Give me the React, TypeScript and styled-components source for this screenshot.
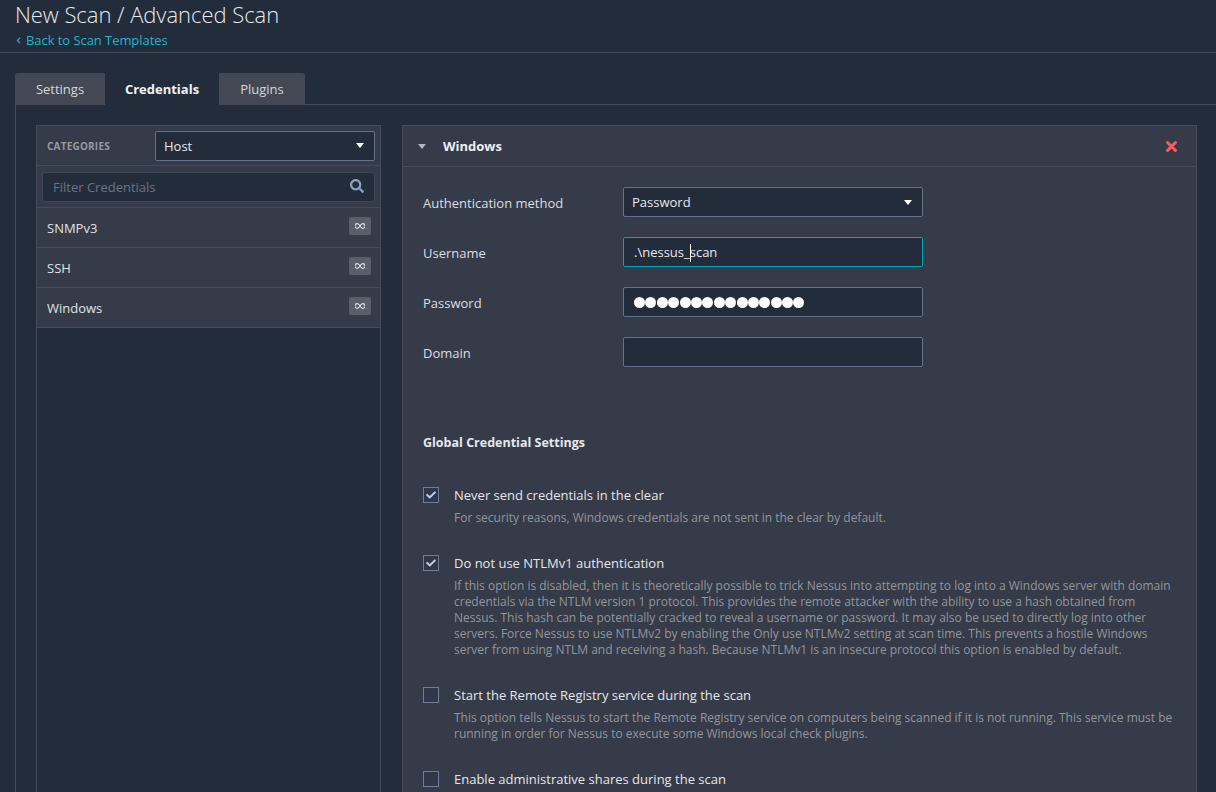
import styled, { createGlobalStyle } from 'styled-components'
import { FaCheck, FaChevronLeft, FaSearch } from 'react-icons/fa'

const GlobalStyle = createGlobalStyle`
  html, body {
    margin: 0;
    height: 792px;
    overflow: hidden;
    background: #232c3b;
  }
  * {
    box-sizing: border-box;
  }
`

const Page = styled.div`
  height: 792px;
  overflow: hidden;
  background: #232c3b;
  color: #e6e8eb;
  font-family: "Open Sans", "Liberation Sans", sans-serif;
  font-size: 13px;
`

const PageHeader = styled.header`
  height: 53px;
  padding: 0 15px;
  border-bottom: 1px solid #444c5a;
`

const Title = styled.h1`
  margin: 0;
  height: 30px;
  font-size: 22px;
  line-height: 29px;
  font-weight: 300;
  letter-spacing: -0.04px;
  color: #e8eaed;
`

const BackLink = styled.a`
  display: flex;
  align-items: center;
  gap: 4px;
  height: 20px;
  font-size: 13px;
  letter-spacing: -0.06px;
  color: #1fb5cb;
`

const Body = styled.main`
  padding: 20px 0 0 15px;
`

const Tabs = styled.nav`
  display: flex;
  height: 32px;
`

const Tab = styled.div<{ $active?: boolean; $width: number }>`
  display: flex;
  align-items: center;
  justify-content: center;
  width: ${({ $width }) => $width}px;
  height: 32px;
  font-size: 13px;
  font-weight: ${({ $active }) => ($active ? 700 : 400)};
  color: ${({ $active }) => ($active ? '#f2f3f5' : '#d5d7da')};
  background: ${({ $active }) => ($active ? '#232c3b' : '#434854')};
  position: relative;
  z-index: 1;

  &:first-child {
    border-top-left-radius: 3px;
  }
  &:last-child {
    border-top-right-radius: 3px;
  }
`

const TabContent = styled.section`
  display: flex;
  align-items: flex-start;
  gap: 21px;
  height: 700px;
  margin-top: -1px;
  padding: 20px 19px 0 20px;
  border-top: 1px solid #444c5a;
  border-left: 1px solid #444c5a;
`

const Sidebar = styled.aside`
  flex: none;
  width: 345px;
  height: 700px;
  border: 1px solid #444c5a;
  border-bottom: 0;
`

const CategoryBar = styled.div`
  display: flex;
  align-items: center;
  justify-content: space-between;
  height: 40px;
  padding: 0 5px 0 10px;
  background: #353b48;
  border-bottom: 1px solid #444c5a;
`

const CategoryLabel = styled.span`
  padding-top: 1px;
  font-size: 10px;
  font-weight: 700;
  letter-spacing: 0.2px;
  color: #969aa1;
`

const Select = styled.div<{ $width: number }>`
  display: flex;
  align-items: center;
  justify-content: space-between;
  width: ${({ $width }) => $width}px;
  height: 30px;
  padding: 0 10px 0 8px;
  font-size: 13px;
  color: #e6e8eb;
  background: #232c3b;
  border: 1px solid #66728a;
  border-radius: 2px;
`

const Caret = styled.i<{ $muted?: boolean }>`
  display: block;
  width: 0;
  height: 0;
  border-left: 4.5px solid transparent;
  border-right: 4.5px solid transparent;
  border-top: 5px solid ${({ $muted }) => ($muted ? '#b4b7bd' : '#ffffff')};
`

const FilterRow = styled.div`
  height: 42px;
  padding: 6px 5px 5px;
  background: #353b48;
  border-bottom: 1px solid #444c5a;
`

const FilterBox = styled.div`
  display: flex;
  align-items: center;
  justify-content: space-between;
  height: 30px;
  padding: 0 10px;
  font-size: 13px;
  color: #6b7280;
  background: #232c3b;
  border: 1px solid #3f4858;
  border-radius: 3px;
  svg {
    color: #8d9fc2;
    font-size: 14px;
    margin-top: -2px;
  }
`

const CredentialRow = styled.div`
  display: flex;
  align-items: center;
  justify-content: space-between;
  height: 40px;
  padding: 0 9px 0 10px;
  font-size: 13px;
  color: #e0e2e5;
  background: #353b48;
  border-bottom: 1px solid #444c5a;
`

const Badge = styled.span`
  display: flex;
  align-items: center;
  justify-content: center;
  width: 22px;
  height: 18px;
  margin-top: -3px;
  background: #5a5e68;
  border-radius: 2px;
  svg {
    color: #dfe1e4;
  }
`

const Panel = styled.article`
  flex: none;
  width: 795px;
  height: 700px;
  background: #353b48;
  border: 1px solid #444c5a;
  border-bottom: 0;
`

const PanelHead = styled.div`
  display: flex;
  align-items: center;
  height: 41px;
  padding: 0 19px 0 15px;
  border-bottom: 1px solid #444c5a;
`

const PanelTitle = styled.strong`
  margin-left: 17px;
  margin-right: auto;
  font-size: 13px;
  font-weight: 700;
  color: #eef0f2;
`

const PanelBody = styled.div`
  padding: 20px 20px 0;
`

const Fields = styled.div`
  display: grid;
  grid-template-columns: 200px 300px;
  row-gap: 20px;
  align-items: center;
`

const FieldLabel = styled.label`
  font-size: 13px;
  padding-top: 2px;
  color: #dcdee1;
`

const Input = styled.div<{ $focused?: boolean }>`
  position: relative;
  display: flex;
  align-items: center;
  height: 30px;
  padding: 0 10px;
  font-size: 13px;
  color: #e6e8eb;
  background: #232c3b;
  border: 1px solid ${({ $focused }) => ($focused ? '#04a5b8' : '#66728a')};
  border-radius: 2px;
`

const TextCursor = styled.i`
  position: absolute;
  left: 66px;
  top: 6px;
  width: 1px;
  height: 18px;
  background: #ffffff;
`

const Dots = styled.span`
  display: flex;
  gap: 0.4px;
`

const Dot = styled.i`
  width: 11px;
  height: 11px;
  border-radius: 50%;
  background: #ffffff;
`

const SectionTitle = styled.h2`
  margin: 67px 0 0;
  font-size: 12.5px;
  line-height: 18px;
  font-weight: 700;
  color: #e6e8eb;
`

const Options = styled.div`
  margin-top: 35px;
  display: flex;
  flex-direction: column;
`

const Option = styled.div<{ $gap: number }>`
  display: grid;
  grid-template-columns: 31px 1fr;
  margin-bottom: ${({ $gap }) => $gap}px;
`

const CheckBox = styled.span`
  display: flex;
  align-items: center;
  justify-content: center;
  width: 16px;
  height: 16px;
  background: #2f3849;
  border: 1px solid #707d9a;
  svg {
    color: #c3cde2;
    font-size: 10px;
  }
`

const OptionLabel = styled.div`
  font-size: 13px;
  line-height: 16px;
  color: #e4e6e9;
`

const OptionHelp = styled.p`
  margin: 7px 0 0;
  font-size: 12px;
  line-height: 16px;
  letter-spacing: -0.01px;
  color: #92969d;
`

const options = [
  {
    label: 'Never send credentials in the clear',
    checked: true,
    gap: 29,
    help: 'For security reasons, Windows credentials are not sent in the clear by default.',
  },
  {
    label: 'Do not use NTLMv1 authentication',
    checked: true,
    gap: 29,
    help: 'If this option is disabled, then it is theoretically possible to trick Nessus into attempting to log into a Windows server with domain credentials via the NTLM version 1 protocol. This provides the remote attacker with the ability to use a hash obtained from Nessus. This hash can be potentially cracked to reveal a username or password. It may also be used to directly log into other servers. Force Nessus to use NTLMv2 by enabling the Only use NTLMv2 setting at scan time. This prevents a hostile Windows server from using NTLM and receiving a hash. Because NTLMv1 is an insecure protocol this option is enabled by default.',
  },
  {
    label: 'Start the Remote Registry service during the scan',
    checked: false,
    gap: 29,
    help: 'This option tells Nessus to start the Remote Registry service on computers being scanned if it is not running. This service must be running in order for Nessus to execute some Windows local check plugins.',
  },
  { label: 'Enable administrative shares during the scan', checked: false, gap: 0 },
]

function InfinityIcon() {
  return (
    <svg width="10" height="6" viewBox="0 0 10 6" fill="none" stroke="currentColor" strokeWidth="1.1">
      <path d="M5 3C4 1.3 3.2.6 2.3.6A2.4 2.4 0 0 0 2.3 5.4C3.2 5.4 4 4.7 5 3C6 1.3 6.8.6 7.7.6A2.4 2.4 0 0 1 7.7 5.4C6.8 5.4 6 4.7 5 3Z" />
    </svg>
  )
}

function CloseIcon() {
  return (
    <svg width="11" height="11" viewBox="0 0 11 11" stroke="#f9585d" strokeWidth="3" strokeLinecap="round">
      <path d="M1.6 1.6L9.4 9.4M9.4 1.6L1.6 9.4" />
    </svg>
  )
}

export default function App() {
  return (
    <Page>
      <GlobalStyle />
      <PageHeader>
        <Title>New Scan / Advanced Scan</Title>
        <BackLink>
          <FaChevronLeft size={7} />
          Back to Scan Templates
        </BackLink>
      </PageHeader>
      <Body>
        <Tabs>
          <Tab $width={90}>Settings</Tab>
          <Tab $width={114} $active>Credentials</Tab>
          <Tab $width={86}>Plugins</Tab>
        </Tabs>
        <TabContent>
          <Sidebar>
            <CategoryBar>
              <CategoryLabel>CATEGORIES</CategoryLabel>
              <Select $width={220}>
                Host
                <Caret />
              </Select>
            </CategoryBar>
            <FilterRow>
              <FilterBox>
                Filter Credentials
                <FaSearch />
              </FilterBox>
            </FilterRow>
            {['SNMPv3', 'SSH', 'Windows'].map((name) => (
              <CredentialRow key={name}>
                {name}
                <Badge>
                  <InfinityIcon />
                </Badge>
              </CredentialRow>
            ))}
          </Sidebar>
          <Panel>
            <PanelHead>
              <Caret $muted />
              <PanelTitle>Windows</PanelTitle>
              <CloseIcon />
            </PanelHead>
            <PanelBody>
              <Fields>
                <FieldLabel>Authentication method</FieldLabel>
                <Select $width={300}>
                  Password
                  <Caret />
                </Select>
                <FieldLabel>Username</FieldLabel>
                <Input $focused>
                  .\nessus_scan
                  <TextCursor />
                </Input>
                <FieldLabel>Password</FieldLabel>
                <Input>
                  <Dots>
                    {Array.from({ length: 15 }, (_, i) => (
                      <Dot key={i} />
                    ))}
                  </Dots>
                </Input>
                <FieldLabel>Domain</FieldLabel>
                <Input />
              </Fields>
              <SectionTitle>Global Credential Settings</SectionTitle>
              <Options>
                {options.map((option) => (
                  <Option key={option.label} $gap={option.gap}>
                    <CheckBox>{option.checked && <FaCheck />}</CheckBox>
                    <div>
                      <OptionLabel>{option.label}</OptionLabel>
                      {option.help && <OptionHelp>{option.help}</OptionHelp>}
                    </div>
                  </Option>
                ))}
              </Options>
            </PanelBody>
          </Panel>
        </TabContent>
      </Body>
    </Page>
  )
}
